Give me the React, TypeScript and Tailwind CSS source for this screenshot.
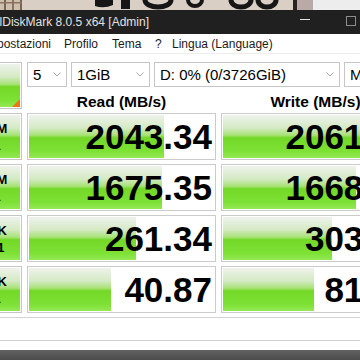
import React from 'react';

interface Result {
  top: string;
  bottom: string;
  read: string;
  write: string;
  readBar: number;
  writeBar: number;
}

const results: Result[] = [
  { top: 'SEQ1M', bottom: 'Q8T1', read: '2043.34', write: '2061.52', readBar: 135, writeBar: 137 },
  { top: 'SEQ1M', bottom: 'Q1T1', read: '1675.35', write: '1668.09', readBar: 133, writeBar: 133 },
  { top: 'RND4K', bottom: 'Q32T1', read: '261.34', write: '303.77', readBar: 107, writeBar: 109 },
  { top: 'RND4K', bottom: 'Q1T1', read: '40.87', write: '81.46', readBar: 82, writeBar: 91 },
];

const meter =
  'bg-[linear-gradient(to_bottom,#eef2ec_0%,#d4eac4_30%,#a8e276_47%,#74d828_53%,#7ee236_85%,#94e856_100%)]';

const Chevron = () => (
  <svg width="8" height="5" viewBox="0 0 8 5" className="shrink-0">
    <path d="M0.5 0.5 L4 4 L7.5 0.5" fill="none" stroke="#a6a6a6" strokeWidth="1" />
  </svg>
);

const Select = ({ value, width }: { value: string; width: string }) => (
  <div
    className={`${width} h-full shrink-0 flex items-center justify-between border border-[#c6c6c6] bg-white pl-[5px] pr-[5px]`}
  >
    <span className="text-[15px] leading-none text-black whitespace-nowrap">{value}</span>
    <Chevron />
  </div>
);

const Photo = () => (
  <svg width="360" height="10" viewBox="0 0 360 10" className="block">
    <rect width="360" height="10" fill="#d9cfc5" />
    {/* window frame on the left */}
    <rect x="0" y="0" width="22" height="10" fill="#cdbfae" />
    <rect x="4" y="0" width="2" height="10" fill="#7a6350" />
    <rect x="12" y="0" width="2" height="10" fill="#8a735f" />
    <rect x="20" y="0" width="2" height="10" fill="#7a6350" />
    <rect x="0" y="2" width="22" height="1.5" fill="#8a735f" />
    {/* bottoms of big printed digits */}
    <path d="M95 0 H113 V5 Q104 9 95 6 Z" fill="#161616" />
    <rect x="121" y="0" width="9" height="9" fill="#161616" />
    <ellipse cx="158" cy="0" rx="13" ry="7" fill="none" stroke="#161616" strokeWidth="5" />
    <ellipse cx="195" cy="0" rx="7" ry="6" fill="none" stroke="#161616" strokeWidth="4" />
    <ellipse cx="241" cy="0" rx="10" ry="7" fill="none" stroke="#161616" strokeWidth="5" />
    <ellipse cx="267" cy="0" rx="9" ry="7" fill="none" stroke="#161616" strokeWidth="5" />
    <rect x="293" y="0" width="4" height="10" fill="#2b2220" />
    <rect x="297" y="0" width="16" height="10" fill="#b9aaa7" />
    <rect x="313" y="0" width="47" height="10" fill="#ededed" />
  </svg>
);

const App = () => {
  return (
    <div className="w-[360px] h-[360px] overflow-hidden bg-white flex flex-col font-['Liberation_Sans',Arial,sans-serif]">
      <Photo />

      {/* title bar */}
      <div className="h-[24px] shrink-0 bg-[#202020] flex items-center">
        <div className="w-[149px] shrink-0 flex justify-end">
          <span className="text-[12px] leading-none text-[#e2e2e2] whitespace-nowrap">
            CrystalDiskMark 8.0.5 x64 [Admin]
          </span>
        </div>
        <div className="ml-[133px] w-[46px] shrink-0 flex justify-center">
          <div className="w-[10px] h-px bg-[#e2e2e2] -mt-[3px]" />
        </div>
        <div className="w-[46px] shrink-0 flex justify-center">
          <div className="w-[10px] h-[10px] border border-[#8c8c8c] -mt-[2px]" />
        </div>
      </div>

      {/* menu */}
      <div className="h-[20px] shrink-0 flex items-center border-b border-[#ededed] text-[12px] leading-none text-[#1b1b1b]">
        <div className="w-[64px] shrink-0 flex justify-end gap-[13px] pr-[13px] whitespace-nowrap">
          <span>File</span>
          <span>Impostazioni</span>
        </div>
        <span className="w-[48px] shrink-0">Profilo</span>
        <span className="w-[43px] shrink-0">Tema</span>
        <span className="w-[17px] shrink-0">?</span>
        <span className="whitespace-nowrap">Lingua (Language)</span>
      </div>

      {/* client */}
      <div className="-ml-[53px] mt-[8px] grid grid-cols-[75px_189px_189px] grid-rows-[25px_18px_47px_47px_47px_47px_24px] gap-x-[5px] gap-y-[4px]">
        <div className="row-span-2 relative border border-[#c4c4c4] p-px bg-white">
          <div className={`h-full ${meter} flex items-center justify-center text-[15px] font-bold`}>All</div>
          <svg width="8" height="8" viewBox="0 0 8 8" className="absolute right-px bottom-px">
            <path d="M8 0 L8 8 L0 8 Z" fill="#f07412" />
          </svg>
        </div>

        <div className="col-span-2 flex gap-[4px]">
          <Select value="5" width="w-[40px]" />
          <Select value="1GiB" width="w-[79px]" />
          <Select value="D: 0% (0/3726GiB)" width="w-[186px]" />
          <Select value="MB/s" width="w-[80px]" />
        </div>

        <div className="col-start-2 flex items-end justify-center text-[15.5px] font-bold leading-none text-black">
          Read (MB/s)
        </div>
        <div className="flex items-end justify-center text-[15.5px] font-bold leading-none text-black">
          Write (MB/s)
        </div>

        {results.map((r, i) => (
          <React.Fragment key={i}>
            <div className="border border-[#c6c6c6] p-px bg-white">
              <div
                className={`h-full ${meter} flex flex-col items-center justify-center text-[13px] font-bold leading-[17px] text-black`}
              >
                <span>{r.top}</span>
                <span>{r.bottom}</span>
              </div>
            </div>
            <div className="border border-[#cbcbcb] p-px bg-white">
              <div className="h-full grid">
                <div className={`col-start-1 row-start-1 h-full ${meter}`} style={{ width: r.readBar }} />
                <span className="col-start-1 row-start-1 self-center justify-self-end pr-[2px] text-[35px] font-bold leading-none text-black">
                  {r.read}
                </span>
              </div>
            </div>
            <div className="border border-[#cbcbcb] p-px bg-white">
              <div className="h-full grid">
                <div className={`col-start-1 row-start-1 h-full ${meter}`} style={{ width: r.writeBar }} />
                <span className="col-start-1 row-start-1 self-center justify-self-end -mr-[4px] text-[35px] font-bold leading-none text-black">
                  {r.write}
                </span>
              </div>
            </div>
          </React.Fragment>
        ))}

        <div className="col-span-3 border border-[#d2d2d2] bg-white" />
      </div>

      <div className="flex-1" />
      <div className="h-[10px] shrink-0 bg-[linear-gradient(to_bottom,#626262,#4b4b4b)]" />
    </div>
  );
};

export default App;
